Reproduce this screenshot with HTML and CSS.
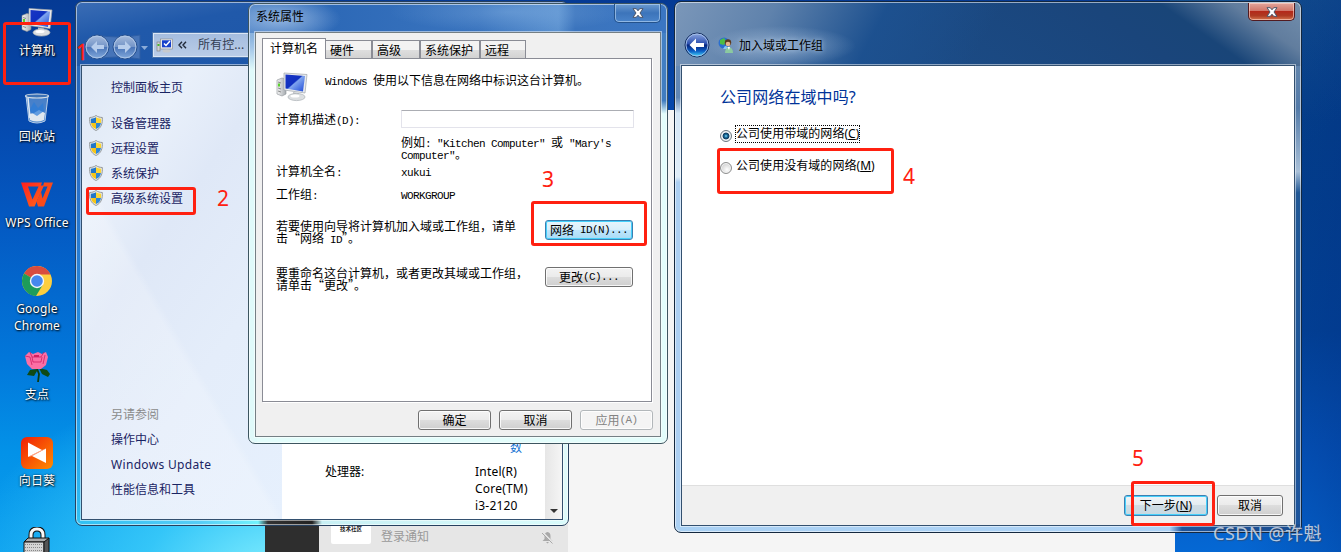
FILE: index.html
```html
<!DOCTYPE html>
<html lang="zh-CN">
<head>
<meta charset="utf-8">
<title>加入域或工作组</title>
<link rel="stylesheet" href="styles.css">
</head>
<body>
<svg width="0" height="0" class="defs">
  <defs>
    <linearGradient id="scr" x1="0" y1="0" x2="1" y2="1"><stop offset="0" stop-color="#1a35c4"/><stop offset=".45" stop-color="#1030c0"/><stop offset=".5" stop-color="#7fa4ee"/><stop offset="1" stop-color="#1c48d8"/></linearGradient>
    <linearGradient id="met" x1="0" y1="0" x2="1" y2="0"><stop offset="0" stop-color="#f4f4f4"/><stop offset="1" stop-color="#a5aaaf"/></linearGradient>
    <linearGradient id="wps" x1="0" y1="0" x2="1" y2="1"><stop offset="0" stop-color="#ff1e1e"/><stop offset="1" stop-color="#ff6a1a"/></linearGradient>
    <linearGradient id="sun" x1="0" y1="0" x2="1" y2="1"><stop offset="0" stop-color="#f01e08"/><stop offset="1" stop-color="#ff8c00"/></linearGradient>
    <linearGradient id="orb" x1="0" y1="0" x2="0" y2="1"><stop offset="0" stop-color="#8fa8e0"/><stop offset=".45" stop-color="#2c50b0"/><stop offset=".5" stop-color="#06247c"/><stop offset=".75" stop-color="#0a5cc4"/><stop offset="1" stop-color="#4ce4ff"/></linearGradient>
    <linearGradient id="orbOff" x1="0" y1="0" x2="0" y2="1"><stop offset="0" stop-color="#a8bddd"/><stop offset=".48" stop-color="#7495c8"/><stop offset=".52" stop-color="#4a75b8"/><stop offset="1" stop-color="#84abdd"/></linearGradient>
    <symbol id="pc" viewBox="0 0 33 31">
      <path d="M1 8l5-2 4 1v15l-4 2-5-2z" fill="url(#met)" stroke="#8b9095" stroke-width=".6"/>
      <path d="M2 10l3 1M2 16l3 1M2 19l3 1" stroke="#777" stroke-width=".8"/>
      <rect x="2" y="11.500" width="2" height="3" fill="#5ad12c"/>
      <path d="M8 1l23 1.500-2 18.500L8 18z" fill="#e9ebed" stroke="#9fa5ab" stroke-width=".7"/>
      <path d="M9.500 2.500L29 4l-2 15.500L9.500 16.500z" fill="url(#scr)"/>
      <path d="M17 20l6 1v4h-6z" fill="#c1c5c9"/>
      <ellipse cx="20.500" cy="25" rx="8.500" ry="3.600" fill="#dcdfe1" stroke="#abb0b5" stroke-width=".7"/>
      <ellipse cx="19" cy="24" rx="4.500" ry="1.500" fill="#fff"/>
    </symbol>
    <symbol id="shield" viewBox="0 0 14 16">
      <path d="M7 .5C5 2 3 2.400.7 2.500.3 8 1.500 13 7 15.500 12.500 13 13.700 8 13.300 2.500 11 2.400 9 2 7 .5z" fill="#e9ebeb" stroke="#8a8f91" stroke-width=".9"/>
      <path d="M7 2.300V8H2C1.800 6 1.800 5 1.900 3.700 4 3.600 5.500 3.200 7 2.300z" fill="#2176c9"/>
      <path d="M7 2.300V8h5c.2-2 .2-3 .1-4.300C10 3.600 8.500 3.200 7 2.300z" fill="#fbd535"/>
      <path d="M7 14V8H2c.5 3 2 5 5 6z" fill="#f5c518"/>
      <path d="M7 14V8h5c-.5 3-2 5-5 6z" fill="#2f86d6"/>
    </symbol>
    <symbol id="close" viewBox="0 0 12 10">
      <path d="M1 .7h3.300L6 2.800 7.700.7H11L8 5l3 4.300H7.700L6 7.200 4.300 9.300H1L4 5z" fill="#fff" stroke="#4b5569" stroke-width="1"/>
    </symbol>
  </defs>
</svg>

<div class="desktop">
  <div class="bg-app"></div>
  <div class="chat">
    <div class="chat-dark"></div>
    <div class="chat-list">
      <div class="avatar">技术社区</div>
      <span class="chat-name">登录通知</span>
      <svg class="mute" width="13" height="13" viewBox="0 0 13 13"><path d="M6.500 1c2 .3 3 2 3 4v3l2 2h-10l2-2V5c0-2 1-3.700 3-4zM5 11h3l-1.500 1.500z" fill="#a8a8a8"/><path d="M1 1l11 11" stroke="#e6e6e6" stroke-width="2"/><path d="M1 2l10.500 10.500" stroke="#a8a8a8"/></svg>
    </div>
  </div>

  <div class="icons">
    <div class="icon"><svg width="33" height="31"><use href="#pc"/></svg><span>计算机</span></div>
    <div class="icon"><svg width="26" height="32" viewBox="0 0 26 32"><path d="M2 3l3 25q8 4 16 0l3-25z" fill="#7fb0e4" fill-opacity=".55" stroke="#b9cfe8" stroke-width="1"/><path d="M5 21l1 6q7 3 14 0l1-7-6-3-5 3z" fill="#e0e8ef"/><path d="M5 18l5-9 4 6 5-5 1 8-7 5z" fill="#2b7cd8" opacity=".7"/><path d="M4 5l2 20" stroke="#dfeaf6" stroke-width="1.500"/><ellipse cx="13" cy="3" rx="11.500" ry="2" fill="#3c71b5" stroke="#dbe2e8" stroke-width="1.200"/></svg><span>回收站</span></div>
    <div class="icon"><svg width="32" height="27" viewBox="0 0 32 27"><path d="M0 1h21l-1.500 4H7l4.500 13L18 4h5l-9.500 21H8z" fill="url(#wps)"/><path d="M23 1h9l-9 24h-6l-1.500-5L20 10l1.500 7L26.500 5H22z" fill="#f94a1a"/></svg><span>WPS Office</span></div>
    <div class="icon"><svg width="32" height="32" viewBox="0 0 32 32"><circle cx="16" cy="16" r="15" fill="#fdce3e"/><path d="M16 16L3 8.500A15 15 0 0 1 29.500 9.500H16z" fill="#d84c3e"/><path d="M3 8.500A15 15 0 0 0 15 31l7-11.500-6-3.500z" fill="#1d9c5b"/><circle cx="16" cy="16" r="7.200" fill="#f4f6f8"/><circle cx="16" cy="16" r="5.800" fill="#4688ee"/></svg><span>Google<br>Chrome</span></div>
    <div class="icon"><svg width="28" height="32" viewBox="0 0 28 32"><path d="M13 15l3 8-1 8" stroke="#0c3b12" stroke-width="1.800" fill="none"/><path d="M14 18l-7 1-3 5 7 1 3-5zM16 17l8 2 3 4-2 3-6-3zM7 24l-2 2M16 22l6 6z" fill="#0f4a16"/><path d="M2 5l4-4 4 2 5-2 4 2 4-2 2 5-2 8-5 4H9L4 13z" fill="#fb6fa5"/><path d="M2 5l5 1 2 8M7 1l2 5h9l3-5M9 6l1 5h8l1-5M22 4l-2 9" fill="none" stroke="#c8145a" stroke-width=".7"/><path d="M11 4h5v2h-5z" fill="#d51f60"/></svg><span>支点</span></div>
    <div class="icon"><svg width="32" height="32" viewBox="0 0 32 32"><rect width="32" height="32" rx="6" fill="url(#sun)"/><path d="M7 5.500l14 7.500-14 7zM25 11.500v14.500L11 19z" fill="#fff"/><path d="M7 20L21 13l4-1.500-14 7.500z" fill="#ffb3a0"/></svg><span>向日葵</span></div>
    <div class="icon lock"><svg width="28" height="32" viewBox="0 0 28 32"><path d="M8 14V8q0-6 6-6t6 6v5" fill="none" stroke="#111" stroke-width="5"/><path d="M8 14V8q0-6 6-6t6 6v5" fill="none" stroke="#f8f8f8" stroke-width="3"/><path d="M1 15l4-4h21l-3 4z" fill="#aaa" stroke="#111"/><path d="M1 15h20v17H1z" fill="#d4d4d4" stroke="#111"/><path d="M21 15l5-4v21h-5z" fill="#555" stroke="#111"/><path d="M2 17.500h18M2 20.500h18M2 23.500h18" stroke="#888" stroke-dasharray="1 1"/></svg></div>
  </div>

  <section class="window control">
    <header class="nav">
      <svg width="72" height="28" viewBox="0 0 72 28"><path d="M14 2q22 4 44 0v24q-22-4-44 0z" fill="#4674b8" stroke="#2f5fa5"/><circle cx="15" cy="14" r="12" fill="url(#orbOff)" stroke="#28518f" stroke-width="1"/><circle cx="15" cy="14" r="10.900" fill="none" stroke="#b3cae8" stroke-width=".9"/><circle cx="43" cy="14" r="12" fill="url(#orbOff)" stroke="#28518f" stroke-width="1"/><circle cx="43" cy="14" r="10.900" fill="none" stroke="#b3cae8" stroke-width=".9"/><path d="M15 8l-6 6 6 6v-4h7v-4h-7zM43 8l6 6-6 6v-4h-7v-4h7z" fill="#b7cdec"/><path d="M59 13h7l-3.500 4z" fill="#8aabd8"/></svg>
      <div class="address">
        <svg width="17" height="15" viewBox="0 0 17 15"><rect x="1" y="4" width="3" height="9" fill="#cfd2d5" stroke="#777" stroke-width=".6"/><path d="M1.500 6h2v2h-2z" fill="#46b82d"/><rect x="4.500" y="1" width="12" height="10" fill="#e5e8eb" stroke="#888" stroke-width=".6"/><rect x="6" y="2.300" width="9" height="7" fill="#1740cc"/><path d="M8 5.500l2 2 4-4.500" stroke="#fff" stroke-width="1.500" fill="none"/><ellipse cx="10.500" cy="13" rx="4" ry="1.500" fill="#c7cacd"/></svg>
        <svg class="chev" width="9" height="8" viewBox="0 0 9 8"><path d="M4 .8L1 4l3 3.200M8 .8L5 4l3 3.200" fill="none" stroke="#222b3b" stroke-width="1.400"/></svg>
        <span>所有控...</span>
      </div>
    </header>
    <div class="client">
      <nav class="side">
        <a class="home">控制面板主页</a>
        <a><svg width="14" height="16"><use href="#shield"/></svg>设备管理器</a>
        <a><svg width="14" height="16"><use href="#shield"/></svg>远程设置</a>
        <a><svg width="14" height="16"><use href="#shield"/></svg>系统保护</a>
        <a><svg width="14" height="16"><use href="#shield"/></svg>高级系统设置</a>
        <div class="also">
          <p class="muted">另请参阅</p><p>操作中心</p><p class="wide">Windows Update</p><p>性能信息和工具</p>
        </div>
      </nav>
      <div class="info">
        <div class="more">数</div>
        <div class="cpu"><span>处理器:</span><span class="val">Intel(R)<br>Core(TM)<br>i3-2120</span></div>
      </div>
      <div class="scroll"><i></i></div>
    </div>
  </section>

  <section class="window props">
    <header class="props-title"><span>系统属性</span><button class="x"><svg width="12" height="10"><use href="#close"/></svg></button></header>
    <div class="client simsun">
      <div class="tabs"><b class="on">计算机名</b><b class="t2">硬件</b><b class="t3">高级</b><b class="t4">系统保护</b><b class="t5">远程</b></div>
      <div class="page">
        <div class="intro"><svg width="33" height="31"><use href="#pc"/></svg><span><em>Windows </em>使用以下信息在网络中标识这台计算机。</span></div>
        <div class="row desc"><label>计算机描述<em>(D):</em></label><div class="input"></div></div>
        <div class="example">例如<em>: "Kitchen Computer" </em>或<em> "Mary's</em><br><em>Computer"</em>。</div>
        <div class="row name"><label>计算机全名<em>:</em></label><span><em>xukui</em></span></div>
        <div class="row group"><label>工作组<em>:</em></label><span><em>WORKGROUP</em></span></div>
        <div class="act a1"><p>若要使用向导将计算机加入域或工作组，请单<br>击“网络<em> ID</em>”。</p><button class="btn hot">网络<em> ID(N)...</em></button></div>
        <div class="act a2"><p>要重命名这台计算机，或者更改其域或工作组，<br>请单击“更改”。</p><button class="btn">更改<em>(C)...</em></button></div>
      </div>
      <div class="ok-row"><button class="btn">确定</button><button class="btn">取消</button><button class="btn off">应用<em>(A)</em></button></div>
    </div>
  </section>

  <section class="window wizard">
    <header class="wiz-title">
      <svg width="26" height="26" viewBox="0 0 26 26"><circle cx="13" cy="13" r="12" fill="url(#orb)" stroke="#17305f" stroke-width="1"/><circle cx="13" cy="13" r="11" fill="none" stroke="#a9c4ea" stroke-width=".9"/><path d="M12 6.500L5.500 13l6.500 6.500v-4.500h8v-4h-8z" fill="#fff"/></svg>
      <svg class="globe" width="16" height="16" viewBox="0 0 16 16"><circle cx="6" cy="6" r="5.500" fill="#2a6fd0"/><path d="M2 3l4-2 2 3-2 4-4-1z" fill="#4dbd45"/><path d="M7 9q3 0 3 3H5z" fill="#86c7f5"/><circle cx="10" cy="5.500" r="3.200" fill="#5b3a20"/><circle cx="10" cy="7" r="2.300" fill="#e5b48c"/><path d="M7 16q0-5 4-6 4 1 4 6z" fill="#8bc9a0"/><path d="M9.500 10l1.500 3 1-3z" fill="#fff"/></svg>
      <span>加入域或工作组</span>
      <button class="x red"><svg width="12" height="10"><use href="#close"/></svg></button>
    </header>
    <div class="client">
      <main>
        <h1>公司网络在域中吗?</h1>
        <div class="opt"><i class="radio sel"></i><span class="focus">公司使用带域的网络(<u>C</u>)</span></div>
        <div class="opt second"><i class="radio"></i><span>公司使用没有域的网络(<u>M</u>)</span></div>
      </main>
      <footer><button class="btn next">下一步(<u>N</u>)</button><button class="btn cancel">取消</button></footer>
    </div>
  </section>

  <div class="mark m1"></div><div class="mark m2"></div><div class="mark m3"></div><div class="mark m4"></div><div class="mark m5"></div>
  <span class="num n1">1</span><span class="num n2">2</span><span class="num n3">3</span><span class="num n4">4</span><span class="num n5">5</span>
  <div class="watermark">CSDN @许魁</div>
</div>
</body>
</html>
```

FILE: styles.css
```css
* { box-sizing: border-box; margin: 0; padding: 0; }
body { width: 1341px; height: 552px; overflow: hidden; font: 12px/16px "Noto Sans", "Noto Sans CJK SC", sans-serif; color: #000; }
.defs { position: absolute; }
svg { display: block; flex: none; }
button { font: inherit; color: inherit; }
em, i { font-style: normal; }
b { font-weight: normal; }

.desktop {
  position: relative; width: 1341px; height: 552px; overflow: hidden;
  background:
    radial-gradient(ellipse 330px 210px at 290px 580px, #8cf4ff 0, rgba(60,205,250,.85) 45%, rgba(20,160,240,0) 100%) no-repeat,
    linear-gradient(180deg, #053a94 0, #0549ae 22%, #0459c2 40%, #0277da 65%, #0392e8 82%, #0a9eee 100%);
}
.desktop::before { content: ""; position: absolute; left: 1170px; top: 0; width: 171px; height: 552px; background: linear-gradient(135deg, rgba(30,90,160,.2), transparent 40%), linear-gradient(90deg, transparent 40%, rgba(0,45,130,.35)), linear-gradient(180deg, #114c8b 0, #04408a 22%, #034397 60%, #0556bd 82%, #0568d4 100%); }
.bg-app { position: absolute; left: 568px; top: 110px; width: 607px; height: 442px; background: #f5f5f5; }
.chat { position: absolute; left: 265px; top: 500px; width: 303px; height: 52px; display: flex; }
.chat-dark { width: 54px; background: #2e2e2e; }
.chat-list { flex: 1; background: #e6e6e6; display: flex; align-items: flex-start; padding: 14px 14px 0 12px; }
.avatar { width: 40px; height: 30px; padding-top: 9px; background: #fff; border-radius: 2px; text-align: center; font-size: 5.500px; line-height: 12px; font-weight: bold; color: #222; }
.chat-name { flex: 1; padding: 15px 0 0 10px; color: #999; }
.mute { margin-top: 17px; }

.icons { position: absolute; left: 0; top: 0; width: 74px; display: flex; flex-direction: column; color: #fff; text-align: center; text-shadow: 1px 1px 2px #000, 0 0 2px rgba(0,0,0,.7); }
.icon { height: 86px; padding-top: 7px; display: flex; flex-direction: column; align-items: center; }
.icon svg { height: 32px; }
.icon span { margin-top: 3px; line-height: 17px; white-space: nowrap; letter-spacing: .2px; }
.lock { padding-top: 11px; }

.window { position: absolute; border: 1px solid #26405f; border-radius: 7px; display: flex; flex-direction: column; padding: 0 5px 5px; box-shadow: inset 0 0 0 1px rgba(255,255,255,.55); }
.client { flex: 1; border: 1px solid #33506f; box-shadow: 0 0 0 1px rgba(255,255,255,.5); background: #fff; display: flex; min-height: 0; }

.control { left: 75px; top: 1px; width: 494px; height: 525px; padding-left: 5px;
  background: linear-gradient(170deg, #3b6db5 0, #2059aa 25%, #1c56a9 100%) 0 0 / 100% 64px no-repeat,
  linear-gradient(90deg, #2fc0f3 0, #56cdf6 25%, #72f2fc 37%, #333 39%, #222 48%, #c8f0f4 50%, #d9fbfb 100%) 0 100% / 100% 8px no-repeat,
  linear-gradient(180deg, #2763b4 0, #2970c8 35%, #2096ea 75%, #2fc0f3 100%) 0 0 / 50% 100% no-repeat, #def9f9; }
.nav { height: 63px; padding: 31px 0 0 1px; display: flex; align-items: flex-start; }
.address { margin-left: -1px; height: 24px; flex: 1; display: flex; align-items: center; border: 1px solid #dbe6f4; outline: 1px solid #4672ad; background: linear-gradient(#a5bddf, #b9cce7); padding-left: 2px; color: #333d52; }
.chev { margin-left: 5px; }
.address span { margin-left: 11px; letter-spacing: .1px; }
.side { width: 200px; background: linear-gradient(60deg, rgba(255,255,255,.15) 0, rgba(255,255,255,.2) 42%, transparent 44%), linear-gradient(125deg, #dde7f5 0, #e9f0fa 22%, #dfe8f7 38%, #e4edfa 65%, #e6f0fd 100%); color: #1a2463; padding: 9px 0 0 7px; display: flex; flex-direction: column; }
.side a { display: flex; align-items: center; gap: 8px; height: 25px; }
.side .home { padding-left: 22px; margin-bottom: 11px; }
.side a svg { margin-top: -1px; }
.also { margin-top: 191px; padding-left: 22px; line-height: 25px; }
.also .muted { color: #8b8b8b; }
.also .wide { letter-spacing: .32px; }
.info { flex: 1; padding-top: 374px; }
.more { padding-left: 228px; color: #1473d2; }
.cpu { display: flex; padding: 7px 0 0 43px; line-height: 17px; }
.cpu .val { margin-left: 110px; white-space: nowrap; letter-spacing: .2px; }
.cpu span:first-child { width: 40px; }
.scroll { width: 17px; background: linear-gradient(90deg, #e6e6e6, #f5f5f5); display: flex; align-items: flex-end; justify-content: center; padding-bottom: 6px; }
.scroll i { border: 4px solid transparent; border-top: 4px solid #333; border-bottom: 0; }

.props { left: 248px; top: 3px; width: 420px; height: 441px; border-color: #3d5560; padding: 0 6px 6px;
  background: radial-gradient(ellipse 60px 22px at 32px 15px, rgba(200,220,245,.6), transparent) no-repeat,
  radial-gradient(ellipse 120px 20px at 260px 8px, rgba(160,200,240,.3), transparent) no-repeat,
  linear-gradient(90deg, #4a80c4 0, #2d69b7 20%, #3a74be 55%, #5c92d0 74%, #3b74bd 78%, #3a76c3 100%) 0 0 / 100% 29px no-repeat,
  linear-gradient(180deg, #4583c8 0, #3f7cc0 22%, transparent 25%) 100% 0 / 8px 100% no-repeat,
  linear-gradient(180deg, #3f7cc0 0, #a4c6e8 10%, #e0fafa 15%) 0 0 / 8px 100% no-repeat, #e3fdfb; }
.props-title { height: 28px; display: flex; justify-content: space-between; padding: 0 0 0 1px; line-height: 26px; }
.props .client { background: #f0f0f0; flex-direction: column; padding: 6px 6px 0 6px; border-color: #747f84; }
.x { width: 47px; height: 19px; border: 1px solid #24528b; border-top: 0; border-radius: 0 0 5px 5px; background: linear-gradient(#6b9bd1, #3c74ba 50%, #4a84ca); box-shadow: inset 0 0 0 1px rgba(200,225,250,.55); display: flex; align-items: center; justify-content: center; }

.simsun { font-family: "Noto Sans CJK SC", sans-serif; line-height: 12px; }
.simsun em { font: 11px/0 "Liberation Mono", monospace; letter-spacing: -.6px; white-space: pre; }
.tabs { display: flex; align-items: flex-end; height: 20px; margin-bottom: -1px; position: relative; }
.tabs b { height: 19px; border: 1px solid #8a8c95; background: linear-gradient(#f3f3f3 50%, #dedede 55%, #d2d2d2); padding: 3px 0 0 4px; white-space: nowrap; }
.tabs .on { width: 64px; height: 21px; background: #fff; border-bottom: 0; padding: 3px 0 0 7px; z-index: 1; }
.tabs .t2 { width: 46px; border-left: 0; } .t3 { width: 48px; } .t4 { width: 60px; } .t5 { width: 46px; }
.page { width: 390px; height: 344px; border: 1px solid #8a8c95; background: #fff; box-shadow: 1px 1px 0 #fff; padding: 13px 0 0 13px; white-space: nowrap; }
.intro { display: flex; gap: 16px; height: 33px; }
.intro span { padding-top: 2px; }
.row { display: flex; height: 12px; }
.row label { width: 125px; flex: none; }
.page .desc { margin-top: 5px; height: 18px; align-items: center; }
.input { width: 233px; height: 18px; border: 1px solid #e3e3eb; border-top-color: #abadb3; border-radius: 1px; background: #fff; }
.example { margin: 8px 0 0 125px; height: 24px; }
.name { margin-top: 5px; }
.group { margin-top: 11px; }
.act { display: flex; height: 24px; }
.act p { width: 269px; }
.a1 { margin-top: 20px; } .a2 { margin-top: 23px; }
.btn { display: flex; align-items: center; justify-content: center; border: 1px solid #707070; border-radius: 3px; background: linear-gradient(#f3f3f3 0, #ebebeb 48%, #dddddd 50%, #cfcfcf 100%); box-shadow: inset 0 0 0 1px rgba(255,255,255,.8); white-space: pre; }
.act .btn { width: 88px; height: 20px; }
.btn.hot, .btn.next { border-color: #3c7fb1; box-shadow: inset 0 0 0 1px #46d0fb; }
.hot { background: linear-gradient(#e8f5fc 0, #d9effb 48%, #bee6fd 50%, #a9dbf5 100%); }
.ok-row { display: flex; gap: 8px; padding: 8px 0 0 156px; }
.ok-row .btn { width: 73px; height: 20px; }
.ok-row .off { color: #838383; border-color: #b2b7ba; background: #f4f4f4; }

.wizard { left: 674px; top: 1px; width: 628px; height: 532px; border-color: #14283f; padding: 0 6px 6px;
  background: radial-gradient(ellipse 75px 20px at 106px 44px, rgba(195,215,238,.5), transparent) no-repeat,
  linear-gradient(118deg, #7b97b9 0, #5f82ac 90px, rgba(29,81,144,.9) 190px, rgba(28,75,131,0) 290px) 0 0 / 100% 64px no-repeat,
  linear-gradient(35deg, #1c5190 0, #1a457b 70%, #194578 80%, #617d9e 90%, #7490ae 100%) 0 0 / 100% 64px no-repeat,
  linear-gradient(90deg, #a9d0f3 0, #aed3f6 79%, #1c549c 81%, #1b4d8f 100%) 0 100% / 100% 8px no-repeat,
  linear-gradient(180deg, #7090b6 0, #5f86b5 18%, #d5e7f7 21%, #dfedf8 33%, #accff2 34%) 0 0 / 8px 100% no-repeat,
  linear-gradient(180deg, #7b95b2 0, #527aa8 20%, #a9c0d8 32%, #205795 36%, #1c549c 100%); }
.wiz-title { height: 63px; display: flex; align-items: flex-start; padding: 30px 0 0 3px; }
.globe { margin: 5px 0 0 8px; }
.wiz-title span { margin: 5px auto 0 5px; line-height: 18px; text-shadow: 0 0 5px #c6d9ec; }
.red { height: 18px; margin: -29px 0 0 0; border-color: #521b20; background: linear-gradient(#e2a59b, #cf7467 48%, #b4291a 50%, #ae3a22 75%, #d6764f); box-shadow: inset 0 0 0 1px rgba(255,220,210,.6); }
.wizard .client { flex-direction: column; }
.wizard main { flex: 1; padding: 20px 0 0 38px; }
.wizard h1 { font-size: 16px; line-height: 22px; font-weight: normal; color: #003399; margin-bottom: 17px; letter-spacing: .1px; }
.opt { display: flex; height: 18px; line-height: 16px; letter-spacing: .05px; }
.opt span { border: 1px solid transparent; height: 18px; }
.opt .focus { border: 1px dotted #000; }
.second { margin-top: 14px; }
.radio { width: 12px; height: 12px; border: 1px solid #8e8f8f; border-radius: 50%; margin: 5px 3px 0 0; background: radial-gradient(circle at 60% 65%, #fff 0, #dcdcdc 55%, #c6c6c6 100%); box-shadow: inset 0 0 0 1px #f4f4f4; }
.sel { background: radial-gradient(circle, #8adcf5 0, #1b6f9f 1.500px, #103a5c 3px, #e8eef2 3.800px); border-color: #6b7780; }
.wizard footer { height: 40px; background: #f0f0f0; border-top: 1px solid #dfdfdf; display: flex; justify-content: flex-end; gap: 9px; padding: 9px 11px 0 0; }
.wizard footer .btn { height: 21px; }
.next { width: 84px; background: linear-gradient(#f0f5f8, #e4ecf0 48%, #d0dde4 50%, #c6d9e2); }
.cancel { width: 66px; }

.mark { position: absolute; border: 3px solid #ff2010; border-radius: 3px; }
.m1 { left: 3px; top: 22px; width: 68px; height: 63px; }
.m2 { left: 86px; top: 187px; width: 110px; height: 28px; }
.m3 { left: 531px; top: 201px; width: 116px; height: 45px; }
.m4 { left: 717px; top: 148px; width: 177px; height: 46px; }
.m5 { left: 1131px; top: 481px; width: 84px; height: 45px; }
.num { position: absolute; color: #ff2010; font-size: 21px; line-height: 24px; }
.n1 { left: 76px; top: 40px; -webkit-text-stroke: .4px #ff2010; } .n2 { left: 217px; top: 186px; } .n3 { left: 542px; top: 167px; } .n4 { left: 903px; top: 164px; } .n5 { left: 1132px; top: 446px; }
.watermark { position: absolute; left: 1213px; top: 520px; font-size: 18px; line-height: 26px; white-space: nowrap; letter-spacing: .5px; color: rgba(225,230,238,.8); text-shadow: 1px 1px 1px rgba(60,70,90,.6); }
```
